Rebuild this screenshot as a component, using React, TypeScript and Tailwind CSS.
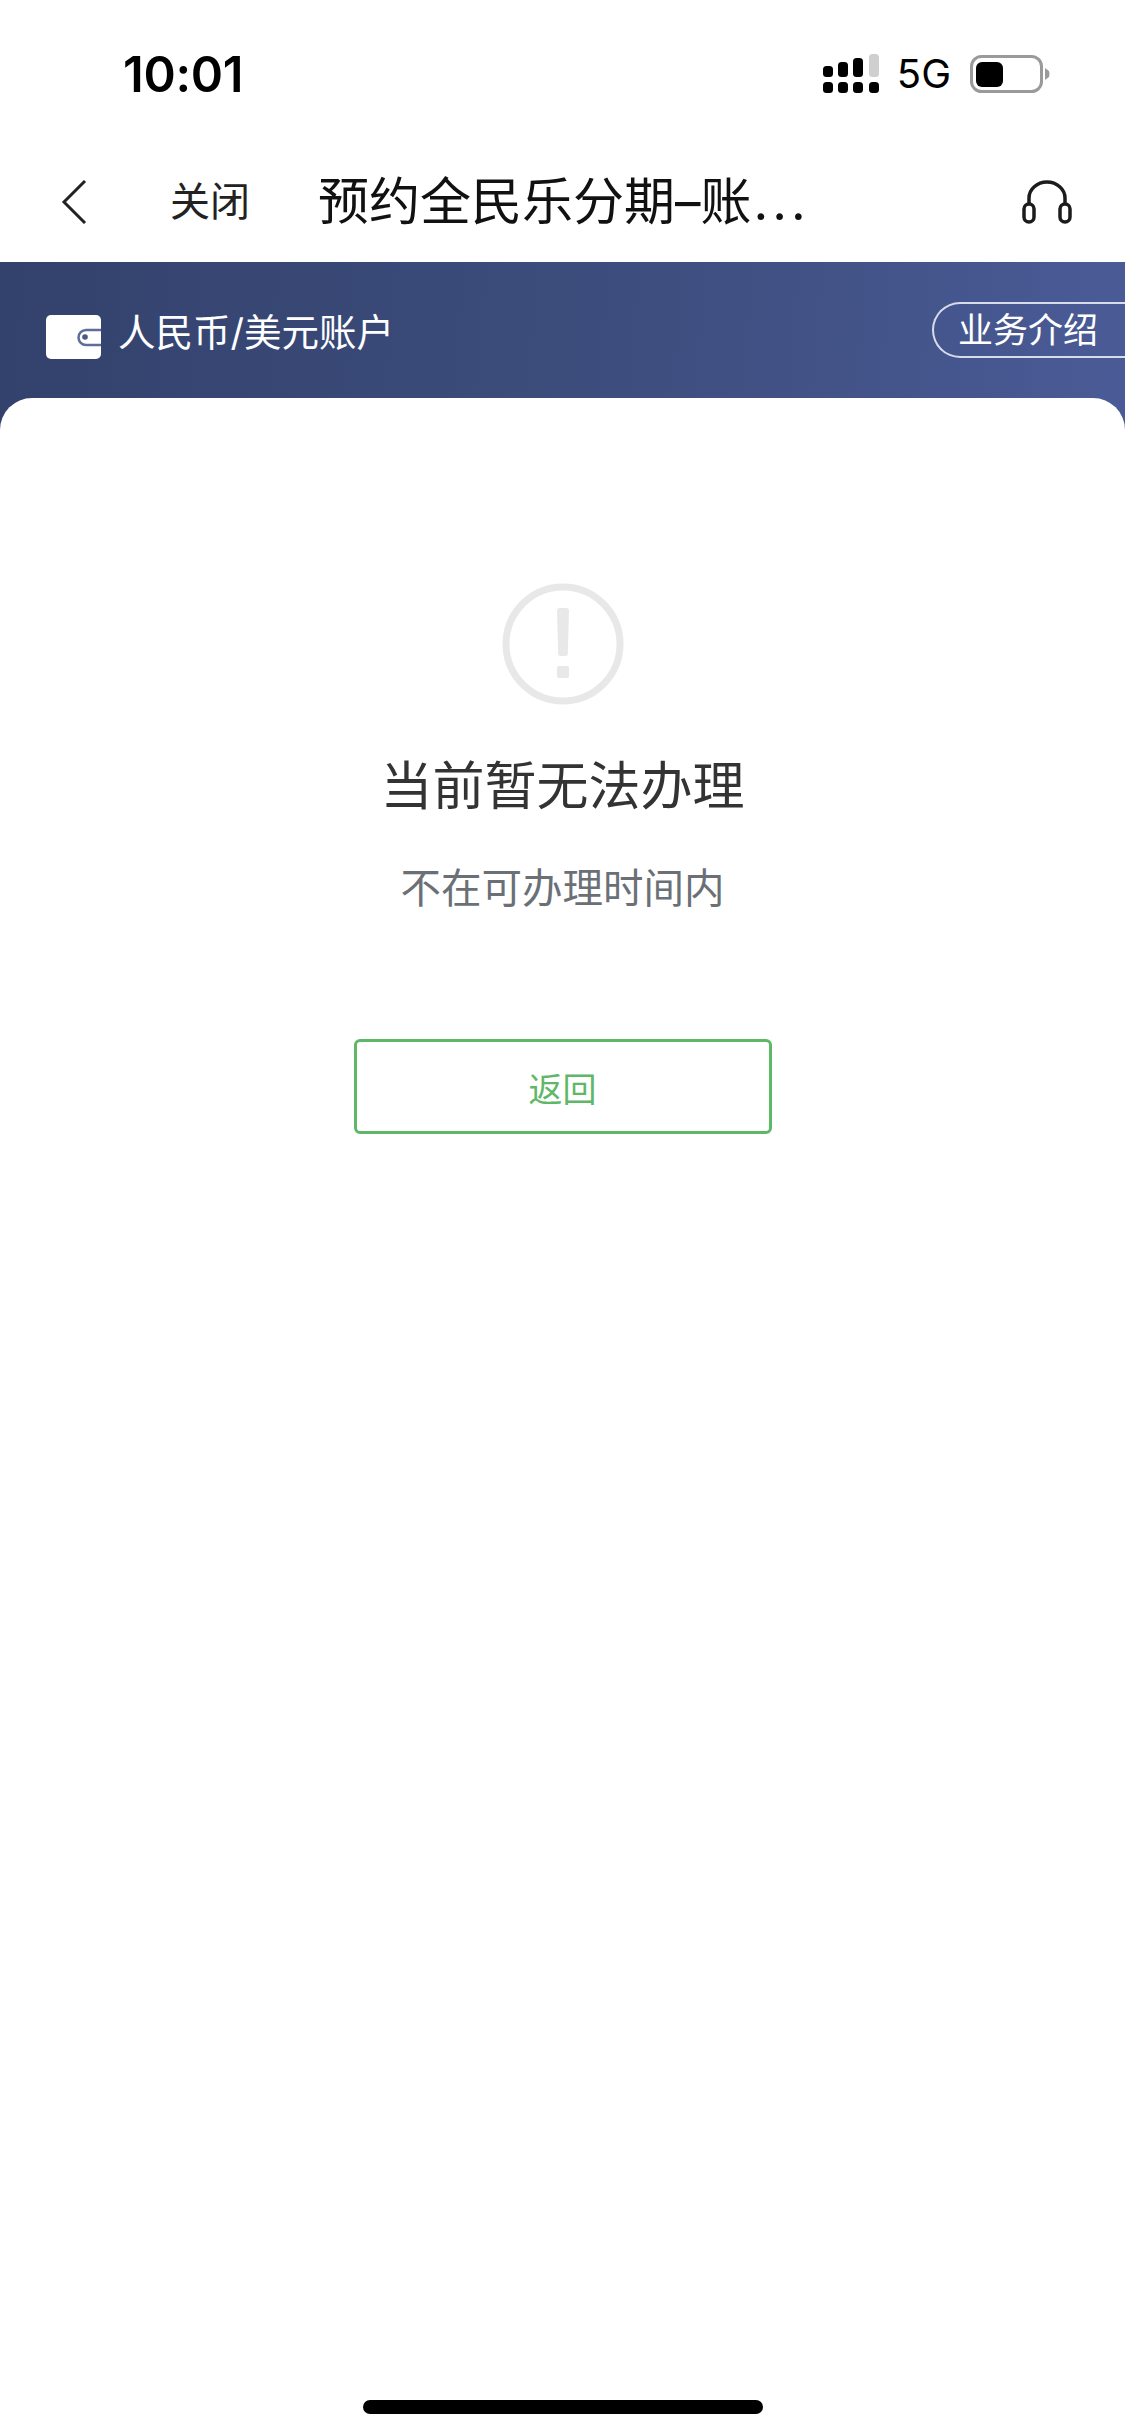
const FONT = "font-['Inter','Noto_Sans_CJK_SC',sans-serif]";

function SignalIcon() {
  return (
    <svg width="56" height="40" viewBox="0 0 56 40" className="block">
      <rect x="0" y="12" width="10" height="11" rx="3.5" fill="#000" />
      <rect x="15" y="8" width="10" height="15" rx="3.5" fill="#000" />
      <rect x="30" y="4" width="10" height="19" rx="3.5" fill="#000" />
      <rect x="46" y="0" width="10" height="23" rx="3.5" fill="#cfcfcf" />
      <rect x="0" y="28" width="10" height="11" rx="3.5" fill="#000" />
      <rect x="15" y="28" width="10" height="11" rx="3.5" fill="#000" />
      <rect x="30" y="28" width="10" height="11" rx="3.5" fill="#000" />
      <rect x="46" y="28" width="10" height="11" rx="3.5" fill="#000" />
    </svg>
  );
}

function BatteryIcon() {
  return (
    <svg width="80" height="38" viewBox="0 0 80 38" className="block">
      <rect x="1.5" y="1.5" width="70" height="35" rx="10" fill="none" stroke="#9a9a9a" strokeWidth="3" />
      <rect x="6" y="7" width="27" height="25" rx="6" fill="#000" />
      <path d="M75 13 L79 16 Q80 19 79 22 L75 25 Z" fill="#9a9a9a" />
    </svg>
  );
}

function WalletIcon() {
  return (
    <svg width="55" height="44" viewBox="0 0 55 44" className="block">
      <rect x="0" y="0" width="55" height="44" rx="5" fill="#fff" />
      <path d="M55 15 H40 a7 7 0 0 0 0 15 H55" fill="none" stroke="#5f6e99" strokeWidth="2.5" />
      <circle cx="39" cy="22" r="2.8" fill="#4a5a86" />
    </svg>
  );
}

function HeadsetIcon() {
  return (
    <svg width="50" height="44" viewBox="0 0 50 44" className="block" fill="none" stroke="#1c1c1c" strokeWidth="3.5">
      <path d="M7 24 V18 a18 16 0 0 1 36 0 V24" />
      <rect x="2" y="24" width="10" height="18" rx="5" />
      <rect x="38" y="24" width="10" height="18" rx="5" />
    </svg>
  );
}

function WarningIcon() {
  return (
    <svg width="122" height="122" viewBox="0 0 122 122" className="block">
      <circle cx="61" cy="61" r="57" fill="none" stroke="#e8e8e8" strokeWidth="7" />
      <path d="M55 28 a3 3 0 0 1 3 -3 h6 a3 3 0 0 1 3 3 l-1.2 43 a2 2 0 0 1 -2 2 h-5.6 a2 2 0 0 1 -2 -2 Z" fill="#e8e8e8" />
      <rect x="55" y="83" width="12" height="12" rx="2" fill="#e8e8e8" />
    </svg>
  );
}

export default function App() {
  return (
    <div className={`${FONT} flex h-[2435px] w-[1125px] flex-col overflow-hidden bg-white`}>
      {/* Status bar */}
      <div className="flex h-[142px] items-start justify-between pt-[51px] pl-[123px] pr-[75px]">
        <span className="text-[49px] leading-[48px] font-semibold tracking-[-0.3px] text-black">10:01</span>
        <div className="mt-[3px] flex items-center">
          <SignalIcon />
          <span className="ml-[18px] text-[40px] leading-[40px] text-black">5G</span>
          <div className="ml-[19px]">
            <BatteryIcon />
          </div>
        </div>
      </div>

      {/* Nav */}
      <div className="flex h-[120px] items-center pl-[61px] pr-[53px]">
        <svg width="26" height="44" viewBox="0 0 26 44" className="block" fill="none" stroke="#222" strokeWidth="3">
          <path d="M24 1 L3 22 L24 43" />
        </svg>
        <span className="ml-[83px] text-[40px] leading-[50px] text-[#222]">关闭</span>
        <span className="ml-[68px] text-[51px] leading-[60px] text-[#111]">
          预约全民乐分期–账<span className="ml-[2px] tracking-[4px]">...</span>
        </span>
        <div className="ml-auto">
          <HeadsetIcon />
        </div>
      </div>

      {/* Account bar */}
      <div className="flex h-[168px] items-start justify-between bg-[linear-gradient(95deg,#33426c_0%,#3d4d7d_55%,#4a5b97_100%)] pt-[40px] pl-[46px]">
        <div className="flex h-[55px] items-center">
          <div className="mt-[14px]">
            <WalletIcon />
          </div>
          <span className="mt-[7px] ml-[17px] text-[37.5px] leading-[50px] text-white">人民币/美元账户</span>
        </div>
        <div className="flex h-[56px] w-[193px] items-center rounded-l-full border-y-2 border-l-2 border-[#d8dcea] pl-[24px]">
          <span className="text-[35px] leading-[50px] text-white">业务介绍</span>
        </div>
      </div>

      {/* Result card */}
      <div className="relative -mt-[32px] flex flex-1 flex-col items-center rounded-t-[32px] bg-white pt-[185px]">
        <WarningIcon />
        <h1 className="mt-[52px] text-[52px] leading-[60px] font-normal text-[#333]">当前暂无法办理</h1>
        <p className="mt-[47px] text-[40.5px] leading-[50px] text-[#6b7077]">不在可办理时间内</p>
        <button className="mt-[125px] h-[95px] w-[418px] rounded-[6px] border-[3px] border-[#5fb868] pt-[6px] text-[34px] text-[#5fb868]">
          返回
        </button>
        <div className="mt-auto mb-[21px] h-[14px] w-[400px] rounded-full bg-black" />
      </div>
    </div>
  );
}
